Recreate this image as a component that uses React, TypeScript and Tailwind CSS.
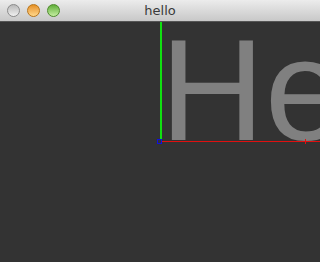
import React from "react";

function Light({ from, to, border }: { from: string; to: string; border: string }) {
  return (
    <div
      className="w-[13px] h-[13px] rounded-full border"
      style={{ background: `radial-gradient(circle at 50% 70%, ${to} 0%, ${from} 80%)`, borderColor: border }}
    />
  );
}

export default function App() {
  return (
    <div className="w-[320px] h-[262px] flex flex-col overflow-hidden bg-[#333333]" style={{ fontFamily: '"Liberation Sans", Arial, sans-serif' }}>
      <div className="relative h-[22px] shrink-0 bg-gradient-to-b from-[#ececec] to-[#c8c8c8] border-b border-[#555555] flex items-center">
        <div className="flex items-center gap-[7px] pl-[7px]">
          <div className="w-[13px] h-[13px] rounded-full border border-[#8a8a8a] bg-gradient-to-b from-[#b8b8b8] to-[#f0f0f0]" />
          <div className="w-[13px] h-[13px] rounded-full border border-[#b8741a] bg-gradient-to-b from-[#e58f1c] to-[#ffd88a]" />
          <div className="w-[13px] h-[13px] rounded-full border border-[#4e8a2c] bg-gradient-to-b from-[#5fae36] to-[#c4eea0]" />
        </div>
        <div className="absolute inset-0 flex items-center justify-center text-[13px] text-[#3a3a3a]" style={{ fontFamily: '"DejaVu Sans", sans-serif' }}>
          hello
        </div>
      </div>
      <div className="relative flex-1 overflow-hidden">
        <div className="absolute left-[162px] top-[119px] w-[200px] h-px bg-[#e01010]" />
        <div
          className="absolute left-[160px] top-[-4px] text-[145px] leading-[145px] text-[#808080] whitespace-nowrap"
          style={{ fontFamily: '"Liberation Sans", Arial, sans-serif' }}
        >
          Hello
        </div>
        <div className="absolute left-[305px] top-[117px] w-px h-[5px] bg-[#e01010]" />
        <div className="absolute left-[160px] top-0 w-[2px] h-[117px] bg-[#10e010]" />
        <div className="absolute left-[157px] top-[117px] w-[5px] h-[5px] border border-[#1010e0]" />
      </div>
    </div>
  );
}
